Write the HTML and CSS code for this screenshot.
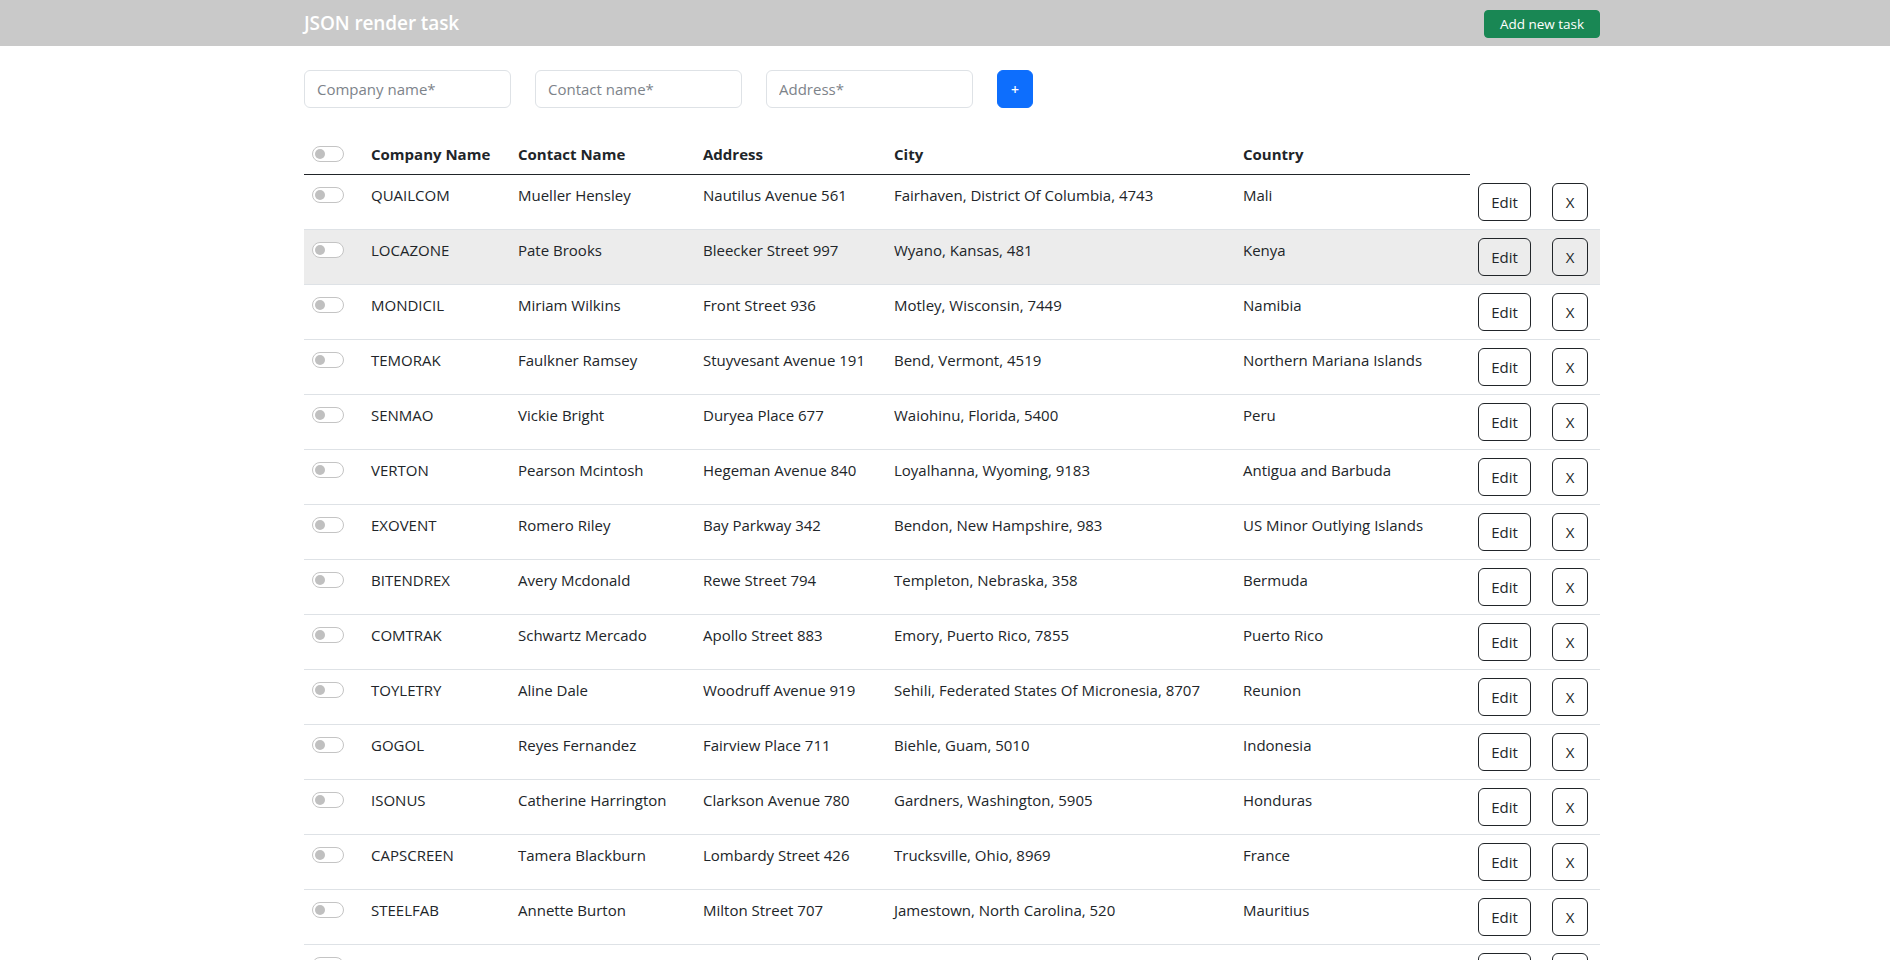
FILE: index.html
```html
<!DOCTYPE html>
<html lang="en">
<head>
<meta charset="utf-8">
<title>JSON render task</title>
<link rel="stylesheet" href="styles.css">
</head>
<body>
<header class="topbar">
  <div class="container bar-inner">
    <span class="brand">JSON render task</span>
    <button class="btn-success">Add new task</button>
  </div>
</header>
<main class="container">
  <form class="add-form">
    <input class="field" type="text" placeholder="Company name*">
    <input class="field" type="text" placeholder="Contact name*">
    <input class="field" type="text" placeholder="Address*">
    <button type="button" class="btn-plus">+</button>
  </form>
  <table class="grid">
    <colgroup>
      <col class="c-sw"><col class="c-co"><col class="c-ct"><col class="c-ad"><col class="c-ci"><col class="c-cn"><col class="c-ed"><col class="c-x">
    </colgroup>
    <thead>
      <tr>
        <th class="hd"><span class="switch"></span></th>
        <th class="hd">Company Name</th>
        <th class="hd">Contact Name</th>
        <th class="hd">Address</th>
        <th class="hd">City</th>
        <th class="hd">Country</th>
        <th></th>
        <th></th>
      </tr>
    </thead>
    <tbody>
      <tr><td><span class="switch"></span></td><td>QUAILCOM</td><td>Mueller Hensley</td><td>Nautilus Avenue 561</td><td>Fairhaven, District Of Columbia, 4743</td><td>Mali</td><td><button class="btn-ol btn-edit">Edit</button></td><td><button class="btn-ol btn-x">X</button></td></tr>
      <tr class="hover"><td><span class="switch"></span></td><td>LOCAZONE</td><td>Pate Brooks</td><td>Bleecker Street 997</td><td>Wyano, Kansas, 481</td><td>Kenya</td><td><button class="btn-ol btn-edit">Edit</button></td><td><button class="btn-ol btn-x">X</button></td></tr>
      <tr><td><span class="switch"></span></td><td>MONDICIL</td><td>Miriam Wilkins</td><td>Front Street 936</td><td>Motley, Wisconsin, 7449</td><td>Namibia</td><td><button class="btn-ol btn-edit">Edit</button></td><td><button class="btn-ol btn-x">X</button></td></tr>
      <tr><td><span class="switch"></span></td><td>TEMORAK</td><td>Faulkner Ramsey</td><td>Stuyvesant Avenue 191</td><td>Bend, Vermont, 4519</td><td>Northern Mariana Islands</td><td><button class="btn-ol btn-edit">Edit</button></td><td><button class="btn-ol btn-x">X</button></td></tr>
      <tr><td><span class="switch"></span></td><td>SENMAO</td><td>Vickie Bright</td><td>Duryea Place 677</td><td>Waiohinu, Florida, 5400</td><td>Peru</td><td><button class="btn-ol btn-edit">Edit</button></td><td><button class="btn-ol btn-x">X</button></td></tr>
      <tr><td><span class="switch"></span></td><td>VERTON</td><td>Pearson Mcintosh</td><td>Hegeman Avenue 840</td><td>Loyalhanna, Wyoming, 9183</td><td>Antigua and Barbuda</td><td><button class="btn-ol btn-edit">Edit</button></td><td><button class="btn-ol btn-x">X</button></td></tr>
      <tr><td><span class="switch"></span></td><td>EXOVENT</td><td>Romero Riley</td><td>Bay Parkway 342</td><td>Bendon, New Hampshire, 983</td><td>US Minor Outlying Islands</td><td><button class="btn-ol btn-edit">Edit</button></td><td><button class="btn-ol btn-x">X</button></td></tr>
      <tr><td><span class="switch"></span></td><td>BITENDREX</td><td>Avery Mcdonald</td><td>Rewe Street 794</td><td>Templeton, Nebraska, 358</td><td>Bermuda</td><td><button class="btn-ol btn-edit">Edit</button></td><td><button class="btn-ol btn-x">X</button></td></tr>
      <tr><td><span class="switch"></span></td><td>COMTRAK</td><td>Schwartz Mercado</td><td>Apollo Street 883</td><td>Emory, Puerto Rico, 7855</td><td>Puerto Rico</td><td><button class="btn-ol btn-edit">Edit</button></td><td><button class="btn-ol btn-x">X</button></td></tr>
      <tr><td><span class="switch"></span></td><td>TOYLETRY</td><td>Aline Dale</td><td>Woodruff Avenue 919</td><td>Sehili, Federated States Of Micronesia, 8707</td><td>Reunion</td><td><button class="btn-ol btn-edit">Edit</button></td><td><button class="btn-ol btn-x">X</button></td></tr>
      <tr><td><span class="switch"></span></td><td>GOGOL</td><td>Reyes Fernandez</td><td>Fairview Place 711</td><td>Biehle, Guam, 5010</td><td>Indonesia</td><td><button class="btn-ol btn-edit">Edit</button></td><td><button class="btn-ol btn-x">X</button></td></tr>
      <tr><td><span class="switch"></span></td><td>ISONUS</td><td>Catherine Harrington</td><td>Clarkson Avenue 780</td><td>Gardners, Washington, 5905</td><td>Honduras</td><td><button class="btn-ol btn-edit">Edit</button></td><td><button class="btn-ol btn-x">X</button></td></tr>
      <tr><td><span class="switch"></span></td><td>CAPSCREEN</td><td>Tamera Blackburn</td><td>Lombardy Street 426</td><td>Trucksville, Ohio, 8969</td><td>France</td><td><button class="btn-ol btn-edit">Edit</button></td><td><button class="btn-ol btn-x">X</button></td></tr>
      <tr><td><span class="switch"></span></td><td>STEELFAB</td><td>Annette Burton</td><td>Milton Street 707</td><td>Jamestown, North Carolina, 520</td><td>Mauritius</td><td><button class="btn-ol btn-edit">Edit</button></td><td><button class="btn-ol btn-x">X</button></td></tr>
      <tr><td><span class="switch"></span></td><td>MAXEMIA</td><td>Rebekah Frye</td><td>Vanderveer Street 848</td><td>Cabana, Alabama, 1963</td><td>Slovenia</td><td><button class="btn-ol btn-edit">Edit</button></td><td><button class="btn-ol btn-x">X</button></td></tr>
    </tbody>
  </table>
</main>
</body>
</html>
```
FILE: styles.css
```css
* { box-sizing: border-box; }
html, body { margin: 0; padding: 0; }
body {
  font-family: "Segoe UI", "Open Sans", "Noto Sans", sans-serif;
  font-size: 15px;
  line-height: 24px;
  color: #212529;
  background: #fff;
}
.container {
  width: 1310px;
  margin: 0 auto;
  padding-left: 14px;
}
.topbar {
  background: #c9c9c9;
  height: 46px;
}
.bar-inner {
  height: 46px;
  display: flex;
  align-items: center;
  justify-content: space-between;
}
.brand {
  color: #fff;
  font-size: 19px;
  font-weight: 600;
  letter-spacing: -0.1px;
}
.btn-success {
  background: #198754;
  color: #fff;
  border: 1px solid #198754;
  border-radius: 4px;
  font-family: inherit;
  font-size: 13.5px;
  line-height: 20px;
  height: 28px;
  width: 116px;
  padding: 0;
  margin-top: 1px;
}
.add-form {
  display: flex;
  gap: 24px;
  margin-top: 24px;
  margin-bottom: 26px;
}
.field {
  width: 207px;
  height: 38px;
  border: 1px solid #dee2e6;
  border-radius: 6px;
  padding: 6px 12px;
  font-family: inherit;
  font-size: 15px;
  color: #212529;
}
.field::placeholder { color: #7d838a; }
.btn-plus {
  width: 36px;
  height: 38px;
  background: #0d6efd;
  border: 1px solid #0d6efd;
  border-radius: 6px;
  color: #fff;
  font-family: inherit;
  font-size: 14px;
  font-weight: 600;
  padding: 0;
}
.grid {
  width: 1296px;
  border-collapse: collapse;
  table-layout: fixed;
}
.c-sw { width: 59px; }
.c-co { width: 147px; }
.c-ct { width: 185px; }
.c-ad { width: 191px; }
.c-ci { width: 349px; }
.c-cn { width: 235px; }
.c-ed { width: 74px; }
.c-x { width: 56px; }
th, td {
  padding: 8px;
  text-align: left;
  vertical-align: top;
  white-space: nowrap;
  overflow: hidden;
}
th { font-weight: 700; }
th.hd { border-bottom: 1px solid #212529; }
td { border-bottom: 1px solid #dee2e6; }
tr.hover td { background: #ececec; }
.switch {
  display: inline-block;
  position: relative;
  width: 32px;
  height: 16px;
  margin-top: 4px;
  border: 1px solid #c4c4c4;
  border-radius: 8px;
  background: #fff;
  vertical-align: top;
}
.switch::before {
  content: "";
  position: absolute;
  left: 2px;
  top: 2px;
  width: 10px;
  height: 10px;
  border-radius: 50%;
  background: #c0c0c0;
}
.btn-ol {
  display: inline-flex;
  align-items: center;
  justify-content: center;
  height: 38px;
  background: transparent;
  border: 1px solid #212529;
  border-radius: 6px;
  color: #212529;
  font-family: inherit;
  font-size: 15px;
  padding: 0;
}
.btn-edit { width: 53px; }
.btn-x { width: 36px; }
```
